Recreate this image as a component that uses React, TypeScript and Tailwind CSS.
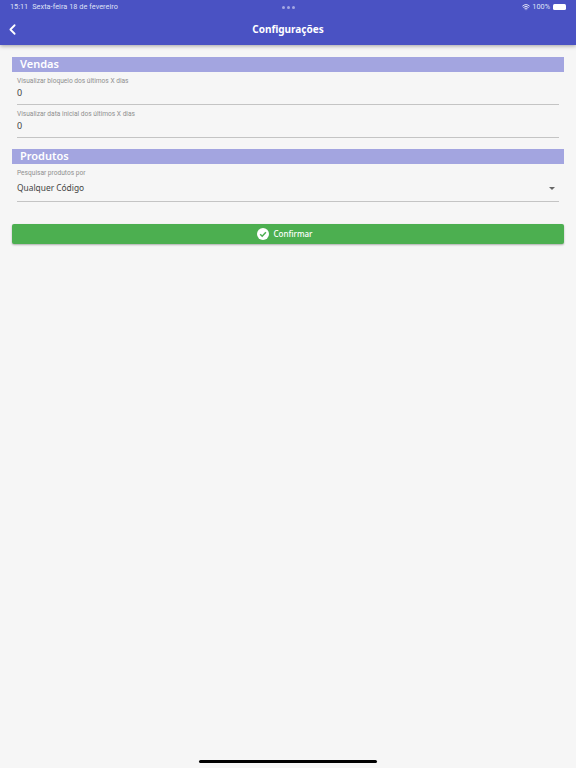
import { ChevronLeft, Wifi } from "lucide-react";

function SectionTitle({ title }: { title: string }) {
  return (
    <div className="h-[15px] bg-[#a3a5e0] pl-[8px] pb-[2px] flex items-center">
      <span className="text-[11px] leading-[13px] font-semibold text-white">{title}</span>
    </div>
  );
}

function NumberField({ label, value }: { label: string; value: string }) {
  return (
    <div className="mx-[5px] h-[33px] border-b border-[#c4c4c4] flex flex-col">
      <span className="mt-[4px] h-[10px] text-[6.6px] leading-[10px] text-[#8f8f8f] font-['Roboto',sans-serif]">{label}</span>
      <span className="text-[9px] leading-[14px] text-[#444444]">{value}</span>
    </div>
  );
}

export default function App() {
  return (
    <div className="relative w-[576px] h-[768px] overflow-hidden bg-[#f6f6f6] font-['Noto_Sans',sans-serif]">
      <header className="h-[45px] bg-[#4a52c3] shadow-[0_1px_4px_rgba(0,0,0,0.35)] text-white">
        <div className="h-[14px] flex items-center justify-between pl-[10px] pr-[10px] text-[7.3px] font-['Roboto',sans-serif] text-[#dfe1f6]">
          <div className="flex gap-[4px] w-[200px]">
            <span>15:11</span>
            <span className="tracking-[0.05px]">Sexta-feira 18 de fevereiro</span>
          </div>
          <div className="flex gap-[2px]">
            <span className="w-[3px] h-[3px] rounded-full bg-[#a4a8e2]" />
            <span className="w-[3px] h-[3px] rounded-full bg-[#a4a8e2]" />
            <span className="w-[3px] h-[3px] rounded-full bg-[#a4a8e2]" />
          </div>
          <div className="flex items-center justify-end gap-[2px] w-[200px]">
            <Wifi size={8} strokeWidth={3} />
            <span>100%</span>
            <span className="w-[13px] h-[6px] rounded-[1.5px] bg-white ml-[1px]" />
          </div>
        </div>
        <div className="relative h-[31px] flex items-center justify-center">
          <ChevronLeft size={17} strokeWidth={2.5} className="absolute left-[4px] top-[7px]" />
          <span className="text-[10px] font-bold">Configurações</span>
        </div>
      </header>

      <main className="px-[12px] pt-[12px]">
        <SectionTitle title="Vendas" />
        <NumberField label="Visualizar bloqueio dos últimos X dias" value="0" />
        <NumberField label="Visualizar data inicial dos últimos X dias" value="0" />

        <div className="mt-[11px]">
          <SectionTitle title="Produtos" />
        </div>
        <div className="mx-[5px] h-[38px] border-b border-[#c4c4c4] flex flex-col">
          <span className="mt-[4px] h-[10px] text-[6.6px] leading-[10px] text-[#8f8f8f] font-['Roboto',sans-serif]">Pesquisar produtos por</span>
          <div className="mt-[3px] flex items-center justify-between">
            <span className="text-[8.4px] leading-[14px] text-[#444444]">Qualquer Código</span>
            <span className="mr-[4px] w-0 h-0 border-x-[3px] border-x-transparent border-t-[3px] border-t-[#666666]" />
          </div>
        </div>

        <button className="mt-[22px] w-full h-[20px] pr-[7px] rounded-[2px] bg-[#4caf50] shadow-[0_1px_2px_rgba(0,0,0,0.3)] flex items-center justify-center gap-[5px] text-white">
          <svg width="12" height="12" viewBox="0 0 12 12">
            <circle cx="6" cy="6" r="6" fill="#ffffff" />
            <path d="M3.2 6.2 5.2 8.2 8.9 4.2" fill="none" stroke="#4caf50" strokeWidth="1.5" />
          </svg>
          <span className="text-[8px] font-medium">Confirmar</span>
        </button>
      </main>

      <div className="absolute left-[199px] bottom-[5px] w-[178px] h-[3px] rounded-full bg-black" />
    </div>
  );
}
